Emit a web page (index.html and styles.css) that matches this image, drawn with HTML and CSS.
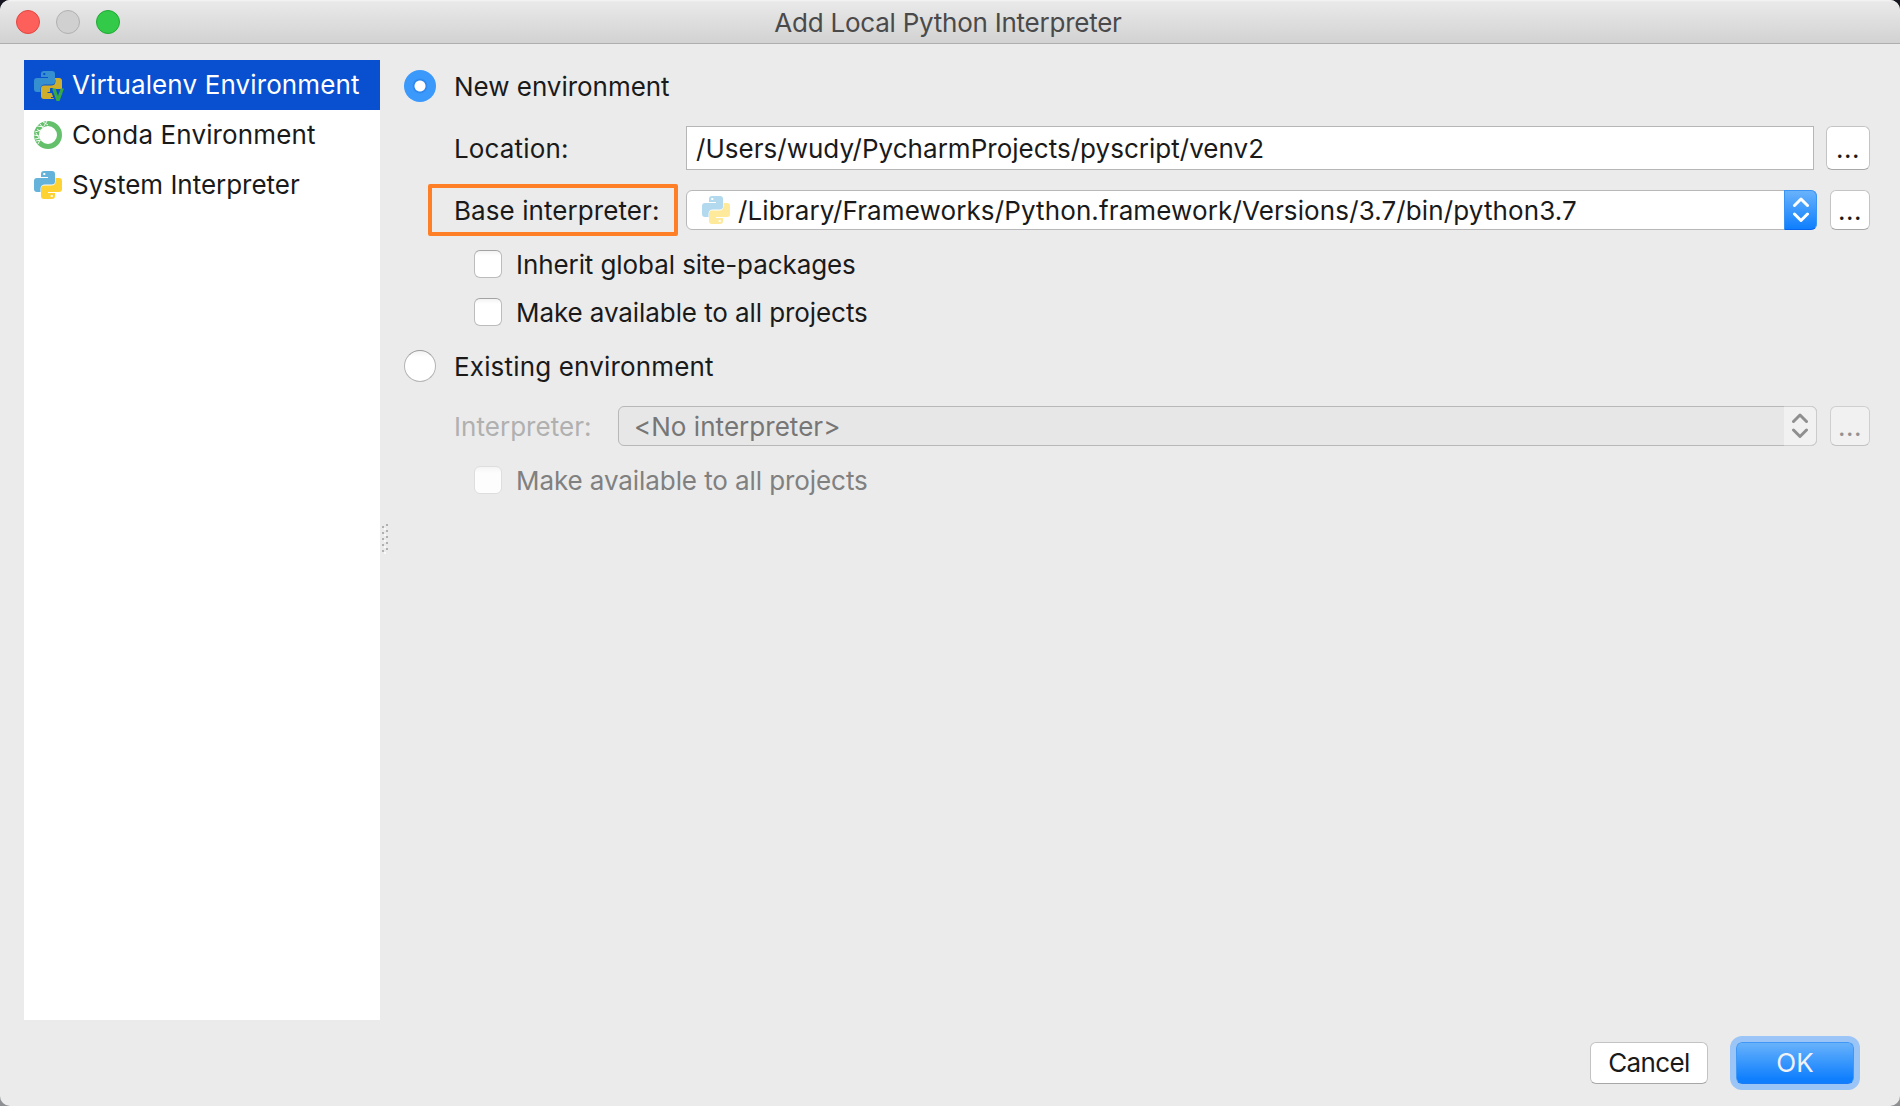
FILE: index.html
```html
<!DOCTYPE html>
<html lang="en">
<head>
<meta charset="utf-8">
<title>Add Local Python Interpreter</title>
<link rel="stylesheet" href="styles.css">
</head>
<body>
<svg class="defs" aria-hidden="true">
  <defs>
    <path id="snake" d="M7 3Q7 0 10 0H18Q21 0 21 3V10.500Q21 13.500 18 13.500H11Q6.500 13.500 6.500 18V21H3Q0 21 0 18V10Q0 7 3 7H14V6H7ZM9.300 2V4H11.300V2Z"/>
    <g id="chevrons" fill="none" stroke-width="3" stroke-linecap="round" stroke-linejoin="round">
      <path d="M3.500 8.500L10 2L16.500 8.500M3.500 17L10 23.500L16.500 17"/>
    </g>
  </defs>
</svg>
<div class="window">
  <header class="titlebar">
    <div class="lights">
      <span class="light close"></span>
      <span class="light minimize"></span>
      <span class="light maximize"></span>
    </div>
    <h1 class="title">Add Local Python Interpreter</h1>
  </header>
  <main class="content">
    <nav class="sidebar">
      <div class="item selected">
        <svg class="icon" width="30" height="30" viewBox="0 0 30 30">
          <use href="#snake" fill="#3690d0" fill-rule="evenodd"/>
          <path d="M21 7H25Q28 7 28 10V18H16V21H20V28H10Q7 28 7 25V17.500Q7 14.500 10 14.500H17Q21.500 14.500 21.500 10Z" fill="#cfae2d"/>
          <path d="M13.500 21.500H18M17 26.500H20" fill="none" stroke="#0850d0" stroke-width="1"/>
          <path d="M16 17H19L22.500 28H20L17 20.500Z" fill="#0850d0"/>
          <path d="M18 17.500H21.600L24 25L26.700 17.500H30L25.500 30H22.500Z" fill="#38a845"/>
        </svg>
        <span class="item-label virtualenv">Virtualenv Environment</span>
      </div>
      <div class="item">
        <svg class="icon" width="30" height="30" viewBox="0 0 30 30">
          <circle cx="14" cy="14" r="11.500" fill="none" stroke="#65c06c" stroke-width="5"/>
          <path d="M13 0L10 5M9 1L14 4M6 3L9 7M3 5L10 6M3 8L7 11M1 11L7 9M0 14L5 15M2 12L5 17M1 18L6 17M2 20L7 19M4 23L6 19" fill="none" stroke="#fff" stroke-width="0.900"/>
        </svg>
        <span class="item-label conda">Conda Environment</span>
      </div>
      <div class="item">
        <svg class="icon" width="30" height="30" viewBox="0 0 30 30">
          <use href="#snake" fill="#65b2da" fill-rule="evenodd"/>
          <use href="#snake" fill="#ffd234" fill-rule="evenodd" transform="rotate(180 14 14)"/>
        </svg>
        <span class="item-label system">System Interpreter</span>
      </div>
    </nav>
    <div class="splitter">
      <svg width="8" height="32" viewBox="0 0 8 32">
        <path d="M2 5h2M2 11h2M2 17h2M2 23h2M2 29h2M6 3h2M6 9h2M6 15h2M6 21h2M6 27h2" stroke="#b0b0b0" stroke-width="2"/>
        <path d="M4 7h2M4 13h2M4 19h2M4 25h2M4 31h2" stroke="#f8f8f8" stroke-width="2"/>
      </svg>
    </div>
    <form class="panel">
      <div class="radio-row">
        <span class="radio checked"></span>
        <span class="text">New environment</span>
      </div>
      <div class="field-row location-row">
        <span class="text label location">Location:</span>
        <div class="textfield"><span class="path">/Users/wudy/PycharmProjects/pyscript/venv2</span></div>
        <div class="browse large"><span class="text">...</span></div>
      </div>
      <div class="field-row base-row">
        <div class="highlight"><span class="base">Base interpreter:</span></div>
        <div class="combo">
          <svg class="combo-icon" width="28" height="28" viewBox="0 0 28 28">
            <use href="#snake" fill="#b2d9ed" fill-rule="evenodd"/>
            <use href="#snake" fill="#ffe99a" fill-rule="evenodd" transform="rotate(180 14 14)"/>
          </svg>
          <span class="text library">/Library/Frameworks/Python.framework/Versions/3.7/bin/python3.7</span>
          <div class="stepper"><svg width="20" height="26" viewBox="0 0 20 26" stroke="#fff"><use href="#chevrons"/></svg></div>
        </div>
        <div class="browse"><span class="text">...</span></div>
      </div>
      <div class="check-row inherit-row">
        <span class="checkbox"></span>
        <span class="text">Inherit global site-packages</span>
      </div>
      <div class="check-row available-row">
        <span class="checkbox"></span>
        <span class="text">Make available to all projects</span>
      </div>
      <div class="radio-row existing-row">
        <span class="radio"></span>
        <span class="text existing">Existing environment</span>
      </div>
      <div class="field-row interpreter-row">
        <span class="text label disabled-label">Interpreter:</span>
        <div class="combo disabled">
          <span class="text none">&lt;No interpreter&gt;</span>
          <div class="stepper"><svg width="20" height="26" viewBox="0 0 20 26" stroke="#8f8f8f"><use href="#chevrons"/></svg></div>
        </div>
        <div class="browse disabled"><span class="text">...</span></div>
      </div>
      <div class="check-row disabled-check">
        <span class="checkbox"></span>
        <span class="text">Make available to all projects</span>
      </div>
    </form>
  </main>
  <footer class="actions">
    <div class="button cancel">Cancel</div>
    <div class="button ok">OK</div>
  </footer>
</div>
</body>
</html>
```
FILE: styles.css
```css
* { box-sizing: border-box; }

body {
  margin: 0;
  background: linear-gradient(#15161f 0 50%, #8d8f92 50%);
  color: #1a1a1a;
  font: 26px/32px Inter, "Liberation Sans", sans-serif;
  white-space: nowrap;
}

.defs { display: none; }

.window {
  display: flex;
  flex-direction: column;
  width: 1900px;
  height: 1106px;
  overflow: hidden;
  border-radius: 10px;
  background: #ebebeb;
}

/* Title bar */
.titlebar {
  display: grid;
  grid-template-columns: 1fr auto 1fr;
  align-items: center;
  height: 44px;
  border-bottom: 1px solid #aeaeae;
  background: linear-gradient(#f6f6f6 0, #e9e9e9 2px, #d2d2d2 100%);
}
.lights { display: flex; gap: 16px; padding-left: 16px; }
.light { width: 24px; height: 24px; border: 1px solid; border-radius: 50%; }
.close { border-color: #e2463f; background: #fd5f5a; }
.minimize { border-color: #b0b0b0; background: #d0d0d0; }
.maximize { border-color: #20a835; background: #32ca48; }
.title {
  margin: 0;
  padding: 2px 4px 0 0;
  color: #4a4a4a;
  font-size: 26px;
  font-weight: 400;
  letter-spacing: -0.24px;
}

.content { display: flex; height: 976px; padding: 16px 0 0 24px; }

/* Environment kinds */
.sidebar { width: 356px; height: 960px; background: #fff; }
.item { display: flex; align-items: center; gap: 8px; height: 50px; padding-left: 10px; }
.icon { margin-top: 1px; }
.selected { background: #0850d0; color: #fff; }
.virtualenv { letter-spacing: 0.124px; }
.conda { letter-spacing: 0.132px; }
.system { letter-spacing: -0.02px; }

.splitter { display: flex; width: 24px; padding-top: 462px; }

/* Form */
.panel { display: flex; flex-direction: column; width: 1466px; padding-top: 10px; }
.text { padding-top: 2px; }
.radio-row { display: flex; align-items: center; gap: 18px; height: 32px; letter-spacing: -0.03px; }
.radio {
  width: 32px;
  height: 32px;
  border: 1px solid #b5b5b5;
  border-top-color: #9b9b9b;
  border-radius: 50%;
  background: linear-gradient(#f3f3f3, #fff 6px);
}
.radio.checked {
  border: 0;
  background: radial-gradient(circle at 50% 50%, #fff 5px, #2a83e8 6px, #3b99fc 8px);
}
.existing { letter-spacing: 0.165px; }

.field-row { display: flex; align-items: center; }
.label { width: 232px; }
.location-row { height: 44px; margin-top: 24px; padding-left: 50px; }
.location { letter-spacing: 0.15px; }
.textfield {
  width: 1128px;
  height: 44px;
  padding: 6px 9px 4px;
  border: 1px solid #b6b6b6;
  background: #fff;
}
.path { letter-spacing: 0.025px; }
.browse {
  display: flex;
  justify-content: center;
  align-items: center;
  width: 40px;
  height: 40px;
  margin-left: 13px;
  border: 1px solid #c4c4c4;
  border-bottom-color: #a8a8a8;
  border-radius: 6px;
  background: #fff;
  letter-spacing: 0.5px;
}
.browse.large { width: 44px; height: 44px; margin-left: 12px; }

.base-row { height: 52px; margin-top: 14px; padding-left: 24px; }
.highlight {
  width: 250px;
  height: 52px;
  margin-right: 8px;
  padding: 7px 0 5px 22px;
  border: 4px solid #ff7f27;
  border-radius: 2px;
}
.base { letter-spacing: 0.08px; }
.combo {
  display: flex;
  align-items: center;
  width: 1131px;
  height: 40px;
  padding-left: 15px;
  border: 1px solid #b8b8b8;
  border-radius: 6px;
  background: #fff;
}
.combo-icon { margin-right: 8px; }
.library { letter-spacing: 0.122px; }
.stepper {
  display: flex;
  justify-content: center;
  align-items: center;
  width: 33px;
  height: 40px;
  margin: -1px -1px -1px auto;
  border: 1px solid #3a94f6;
  border-bottom-color: #0866ee;
  border-radius: 0 6px 6px 0;
  background: linear-gradient(#68b2fb, #0f7ffe);
}

.check-row { display: flex; align-items: center; gap: 14px; height: 28px; padding-left: 70px; letter-spacing: -0.085px; }
.inherit-row { margin-top: 14px; }
.available-row { margin-top: 20px; }
.checkbox {
  width: 28px;
  height: 28px;
  border: 1px solid #bcbcbc;
  border-top-color: #a3a3a3;
  border-radius: 6px;
  background: linear-gradient(#f3f3f3, #fff 5px);
}
.existing-row { margin-top: 24px; }

.interpreter-row { height: 40px; margin-top: 24px; padding-left: 50px; }
.disabled-label { width: 164px; color: #b0b0b0; letter-spacing: 0.04px; }
.combo.disabled { width: 1199px; background: #e7e7e7; color: #767676; }
.none { letter-spacing: 0.04px; }
.disabled .stepper { border: 1px solid #cbcbcb; border-left: 0; background: #f1f1f1; }
.browse.disabled { border-color: #cfcfcf; border-bottom-color: #c2c2c2; background: #f1f1f1; color: #929292; }
.disabled-check { margin-top: 20px; color: #808080; }
.disabled-check .checkbox { border-color: #dedede; background: linear-gradient(#f4f4f4, #fdfdfd 6px); }

/* Dialog buttons */
.actions { display: flex; justify-content: flex-end; gap: 28px; padding: 22px 46px 0 0; }
.button {
  width: 118px;
  height: 42px;
  border: 1px solid #c3c3c3;
  border-bottom-color: #a7a7a7;
  border-radius: 6px;
  background: #fff;
  line-height: 40px;
  text-align: center;
}
.cancel { letter-spacing: -0.6px; }
.ok {
  border-color: #3f97f6;
  border-bottom-color: #1a7cf5;
  background: linear-gradient(#68b2fb, #0f7ffe 90%);
  box-shadow: 0 0 0 6px #9bc5f6;
  color: #f0f2f8;
}
```
